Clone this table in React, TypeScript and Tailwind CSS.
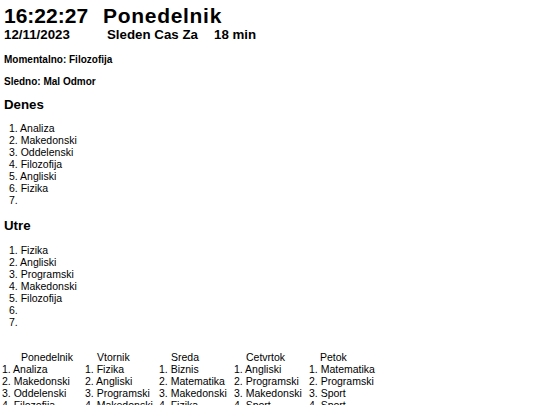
const today = ["Analiza", "Makedonski", "Oddelenski", "Filozofija", "Angliski", "Fizika", ""];
const tomorrow = ["Fizika", "Angliski", "Programski", "Makedonski", "Filozofija", "", ""];

const week: { day: string; subjects: string[]; col: string; head: string }[] = [
  { day: "Ponedelnik", subjects: ["Analiza", "Makedonski", "Oddelenski", "Filozofija"], col: "w-[83px]", head: "pl-[19px]" },
  { day: "Vtornik", subjects: ["Fizika", "Angliski", "Programski", "Makedonski"], col: "w-[74px]", head: "pl-[12px]" },
  { day: "Sreda", subjects: ["Biznis", "Matematika", "Makedonski", "Fizika"], col: "w-[75px]", head: "pl-[12px]" },
  { day: "Cetvrtok", subjects: ["Angliski", "Programski", "Makedonski", "Sport"], col: "w-[75px]", head: "pl-[12px]" },
  { day: "Petok", subjects: ["Matematika", "Programski", "Sport", "Sport"], col: "w-[80px]", head: "pl-[11px]" },
];

function DayList({ items, className }: { items: string[]; className: string }) {
  return (
    <ol className={`pl-[5px] text-[10.5px] leading-[12px] ${className}`}>
      {items.map((item, i) => (
        <li key={i}>
          {i + 1}. {item}
        </li>
      ))}
    </ol>
  );
}

export default function App() {
  return (
    <div
      className="min-h-[405px] bg-white px-[4px] pt-[5px] text-black"
      style={{ fontFamily: '"Liberation Sans", Arial, sans-serif' }}
    >
      <h1 className="flex text-[21px] font-bold leading-[22px]">
        <span className="w-[99px]">16:22:27</span>
        <span className="tracking-[0.7px]">Ponedelnik</span>
      </h1>
      <div className="flex text-[13.3px] font-bold leading-[15px]">
        <span className="w-[103px]">12/11/2023</span>
        <span className="w-[107px]">Sleden Cas Za</span>
        <span>18 min</span>
      </div>

      <p className="mt-[12px] text-[10px] font-bold leading-[12px]">Momentalno: Filozofija</p>
      <p className="mt-[10px] text-[10px] font-bold leading-[12px]">Sledno: Mal Odmor</p>

      <h2 className="mt-[9px] text-[13.3px] font-bold leading-[15px]">Denes</h2>
      <DayList items={today} className="mt-[10px]" />

      <h2 className="mt-[12px] text-[13.3px] font-bold leading-[15px]">Utre</h2>
      <DayList items={tomorrow} className="mt-[11px]" />

      <div className="mt-[23px] -ml-[2px] flex text-[10.5px] leading-[12px]">
        {week.map((col) => (
          <div key={col.day} className={col.col}>
            <div className={col.head}>{col.day}</div>
            {col.subjects.map((s, i) => (
              <div key={i} className="whitespace-nowrap">
                {i + 1}. {s}
              </div>
            ))}
          </div>
        ))}
      </div>
    </div>
  );
}
